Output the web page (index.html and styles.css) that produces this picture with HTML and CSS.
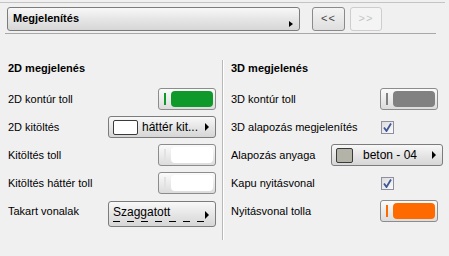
FILE: index.html
```html
<!DOCTYPE html>
<html lang="hu">
  <head>
    <meta charset="UTF-8" />
    <title>Megjelenítés</title>
    <link rel="stylesheet" href="styles.css">
  </head>
  <body>
    <div class="top">
      <div class="toolbar">
        <div class="select main"><span>Megjelenítés</span><i class="arrow low"></i></div>
        <button class="nav">&lt;&lt;</button>
        <button class="nav" disabled>&gt;&gt;</button>
      </div>
    </div>

    <div class="panels">
      <!-- 2D -->
      <section class="panel left">
        <h2>2D megjelenés</h2>
        <div class="row">
          <label>2D kontúr toll</label>
          <span class="pen green"><i class="tick"></i><i class="fill"></i></span>
        </div>
        <div class="row">
          <label>2D kitöltés</label>
          <div class="select combo"><i class="swatch white"></i><span>háttér kit...</span><i class="arrow"></i></div>
        </div>
        <div class="row">
          <label>Kitöltés toll</label>
          <span class="pen blank"><i class="tick"></i><i class="fill"></i></span>
        </div>
        <div class="row">
          <label>Kitöltés háttér toll</label>
          <span class="pen blank"><i class="tick"></i><i class="fill"></i></span>
        </div>
        <div class="row">
          <label>Takart vonalak</label>
          <div class="select combo dashed"><span>Szaggatott</span><i class="arrow"></i><i class="dash"></i></div>
        </div>
      </section>

      <div class="divider"></div>

      <!-- 3D -->
      <section class="panel right">
        <h2>3D megjelenés</h2>
        <div class="row">
          <label>3D kontúr toll</label>
          <span class="pen gray"><i class="tick"></i><i class="fill"></i></span>
        </div>
        <div class="row">
          <label>3D alapozás megjelenítés</label>
          <span class="check"><svg width="9" height="9" viewBox="0 0 9 9"><path d="M1 4.5 L3.5 8 L8 0.5" fill="none" stroke="#3f5796" stroke-width="1.8"/></svg></span>
        </div>
        <div class="row">
          <label>Alapozás anyaga</label>
          <div class="select combo wide"><i class="swatch concrete"></i><span>beton - 04</span><i class="arrow"></i></div>
        </div>
        <div class="row">
          <label>Kapu nyitásvonal</label>
          <span class="check"><svg width="9" height="9" viewBox="0 0 9 9"><path d="M1 4.5 L3.5 8 L8 0.5" fill="none" stroke="#3f5796" stroke-width="1.8"/></svg></span>
        </div>
        <div class="row">
          <label>Nyitásvonal tolla</label>
          <span class="pen orange"><i class="tick"></i><i class="fill"></i></span>
        </div>
      </section>
    </div>
  </body>
</html>
```

FILE: styles.css
```css
body {
  margin: 0;
  background: #f0f0f0;
  font-family: "Liberation Sans", Arial, sans-serif;
  font-size: 11px;
  color: #000;
}

/* top bar */
.top {
  margin-top: 2px;
  margin-right: 4px;
  border-top: 1px solid #c4c4c4;
}
.toolbar {
  display: flex;
  align-items: center;
  margin: 0 9px 0 5px;
  padding: 4px 0 2px 2px;
  border-bottom: 1px solid #a8a8a8;
}
.select {
  position: relative;
  display: flex;
  align-items: center;
  box-sizing: border-box;
  border: 1px solid #7c7c7c;
  border-radius: 3px;
  background: linear-gradient(#f8f8f8, #e6e6e6 50%, #d6d6d6);
}
.select.main {
  width: 293px;
  height: 24px;
  padding: 0 0 3px 5px;
  font-weight: bold;
}
.arrow {
  position: absolute;
  right: 6px;
  top: 50%;
  margin-top: -4px;
  border-left: 4px solid #000;
  border-top: 4px solid transparent;
  border-bottom: 4px solid transparent;
}
.arrow.low {
  top: auto;
  margin-top: 0;
  bottom: 3px;
  border-top-width: 3px;
  border-bottom-width: 3px;
}
.nav {
  box-sizing: border-box;
  width: 33px;
  height: 24px;
  margin-left: 12px;
  padding: 0 0 3px;
  border: 1px solid #8a8a8a;
  border-radius: 3px;
  background: linear-gradient(#f4f4f4, #dedede);
  font-family: "Liberation Sans", Arial, sans-serif;
  font-size: 11px;
  color: #444;
  letter-spacing: 1px;
}
.nav[disabled] {
  width: 32px;
  margin-left: 5px;
  border-color: #cdcdcd;
  background: #f4f4f4;
  color: #c4c4c4;
}

/* panels */
.panels {
  display: flex;
  padding-top: 26px;
}
.panel {
  box-sizing: border-box;
}
.panel.left {
  width: 216px;
  padding-left: 8px;
}
.panel.right {
  width: 225px;
  padding-left: 8px;
  padding-right: 5px;
}
.divider {
  width: 1px;
  height: 180px;
  margin-left: 6px;
  background: #b8b8b8;
  box-shadow: 1px 0 0 #fff;
}
h2 {
  margin: 0 0 9px;
  font-size: 11px;
  line-height: 16px;
  font-weight: bold;
}
.row {
  display: flex;
  align-items: center;
  justify-content: space-between;
  height: 28px;
}

/* pen button */
.pen {
  position: relative;
  box-sizing: border-box;
  width: 58px;
  height: 22px;
  border: 1px solid #8c8c8c;
  border-radius: 3px;
  background: linear-gradient(#fbfbfb, #dcdcdc);
}
.right .pen {
  margin-right: 5px;
}
.pen .tick {
  position: absolute;
  left: 5px;
  top: 4px;
  width: 2px;
  height: 12px;
}
.pen .fill {
  position: absolute;
  left: 12px;
  top: 2px;
  right: 2px;
  bottom: 2px;
  border-radius: 4px;
}
.green .tick, .green .fill { background: #10992b; }
.gray .tick, .gray .fill { background: #818181; }
.orange .tick, .orange .fill { background: #ff6a00; }
.blank .tick { background: #e2e2e2; }
.blank .fill { background: #fff; }

/* combos */
.combo {
  width: 108px;
  height: 22px;
  padding-left: 4px;
  font-size: 12px;
}
.combo.wide {
  width: 112px;
}
.combo span {
  margin-left: 4px;
}
.swatch {
  box-sizing: border-box;
  width: 25px;
  height: 15px;
  border: 1px solid #3a3a3a;
  border-radius: 2px;
}
.swatch.white { background: #fff; }
.swatch.concrete { width: 17px; background: #b3b3a8; }
.combo.wide span { margin-left: 10px; }
.combo.dashed {
  height: 26px;
  margin-top: 6px;
  align-items: flex-start;
  padding-top: 3px;
}
.combo.dashed span {
  margin-left: 0;
}
.combo.dashed .arrow {
  top: 9px;
  margin-top: 0;
}
.dash {
  position: absolute;
  left: 4px;
  right: 4px;
  bottom: 4px;
  height: 1px;
  background: repeating-linear-gradient(90deg, #000 0 7px, transparent 7px 14px);
}

/* checkbox */
.check {
  display: flex;
  align-items: center;
  justify-content: center;
  box-sizing: border-box;
  width: 13px;
  height: 13px;
  margin-right: 49px;
  border: 1px solid #8f8f9f;
  background: linear-gradient(135deg, #dcdcdc, #fbfbfb);
}
```
